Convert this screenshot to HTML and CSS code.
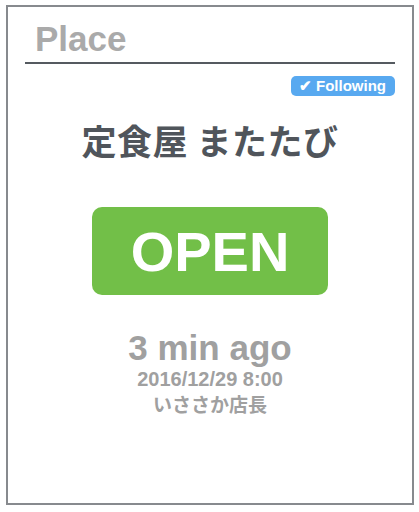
FILE: index.html
```html
<!DOCTYPE html>
<html>
<head>
<meta charset="utf-8">
<link rel="stylesheet" href="styles.css">
</head>
<body>
<div class="card">
  <div class="header">
    <h1 class="title">Place</h1>
  </div>
  <div class="badge-row"><span class="badge">✔ Following</span></div>
  <div class="name">定食屋 またたび</div>
  <div class="status">OPEN</div>
  <div class="ago">3 min ago</div>
  <div class="date">2016/12/29 8:00</div>
  <div class="author">いささか店長</div>
</div>
</body>
</html>
```
FILE: styles.css
```css
html, body { margin: 0; padding: 0; background: #fff; }
body {
  font-family: "Liberation Sans", Arial, "Noto Sans CJK JP", sans-serif;
}
.card {
  box-sizing: border-box;
  width: 408px;
  height: 500px;
  margin: 5px 0 0 6px;
  border: 2px solid #878a8e;
  display: flex;
  flex-direction: column;
  align-items: center;
}
.header {
  align-self: stretch;
  margin: 0 17px 0 17px;
  border-bottom: 2px solid #555a60;
  height: 57px;
  box-sizing: border-box;
}
.title {
  margin: 0;
  padding: 14px 0 0 10px;
  font-size: 35px;
  line-height: 36px;
  font-weight: bold;
  color: #aaaaaa;
}
.badge-row {
  align-self: stretch;
  display: flex;
  justify-content: flex-end;
  padding: 12px 17px 0 0;
}
.badge {
  display: inline-block;
  background: #58a9f0;
  color: #fff;
  font-size: 15px;
  font-weight: bold;
  line-height: 20px;
  height: 20px;
  padding: 0 9px 0 8px;
  border-radius: 5px;
}
.name {
  margin-top: 24px;
  font-family: "Noto Sans CJK JP", sans-serif;
  font-size: 35px;
  font-weight: bold;
  line-height: 40px;
  color: #50555b;
  letter-spacing: 0.5px;
}
.status {
  margin-top: 47px;
  width: 236px;
  height: 88px;
  border-radius: 10px;
  background: #72bf48;
  color: #fff;
  font-size: 56px;
  font-weight: bold;
  display: flex;
  align-items: center;
  justify-content: center;
}
.ago {
  margin-top: 35px;
  font-size: 35px;
  font-weight: bold;
  line-height: 36px;
  color: #a0a0a0;
}
.date {
  margin-top: 3px;
  font-size: 20px;
  font-weight: bold;
  line-height: 20px;
  color: #a0a0a0;
}
.author {
  margin-top: 2px;
  font-family: "Noto Sans CJK JP", sans-serif;
  font-size: 19px;
  font-weight: bold;
  line-height: 26px;
  color: #a0a0a0;
}
```
